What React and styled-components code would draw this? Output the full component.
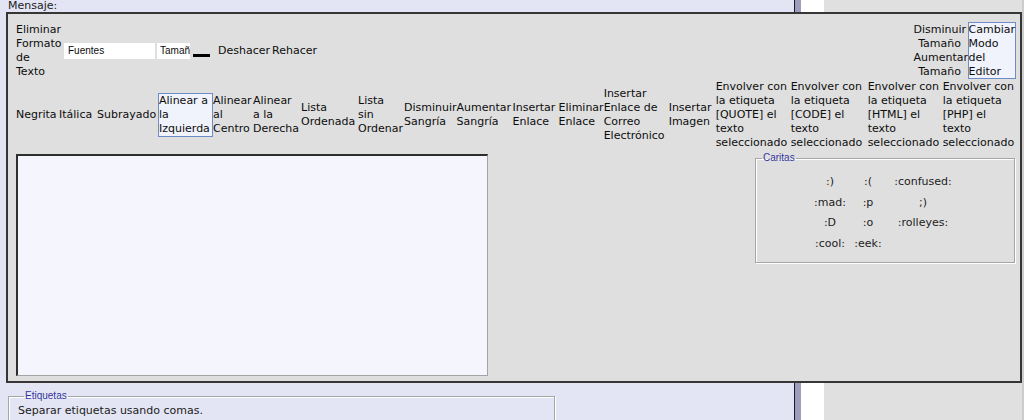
import React from 'react'
import styled, { createGlobalStyle, css } from 'styled-components'

const GlobalStyle = createGlobalStyle`
  html, body { margin: 0; padding: 0; }
  body {
    background: #e0e0e0;
    font-family: "DejaVu Sans", Verdana, sans-serif;
    font-size: 11px;
    color: #0d0d0d;
  }
`

// page frame: main column, divider, white gutter, side column
const Page = styled.div`
  display: flex;
  width: 1024px;
  height: 420px;
  overflow: hidden;
`
const MainCol = styled.div`
  flex: 0 0 794px;
  min-width: 0;
  box-sizing: border-box;
  padding-left: 6px;
  background: #e3e5f4;
`
const Divider = styled.div`
  flex: 0 0 6px;
  border-left: 1px solid #1c1c1c;
  background: #9d9dbd;
`
const Gutter = styled.div`
  flex: 0 0 23px;
  background: #fff;
`
const SideCol = styled.div`
  flex: 1;
  background: #e0e0e0;
  border-right: 2px solid #cdcdcd;
`

const FieldLabel = styled.div`
  height: 12px;
  line-height: 12px;
  padding-left: 2px;
  color: #222;
`

// editor panel
const Editor = styled.div`
  position: relative;
  z-index: 1;
  width: 1016px;
  box-sizing: border-box;
  border: 2px solid #363636;
  background: #dfdfdf;
  padding: 8px 2px 5px 8px;
`
const Toolbar = styled.div`
  display: flex;
  align-items: center;
  height: ${p => p.$h}px;
  margin-top: ${p => p.$mt || 0}px;
`
const ToolButton = styled.div`
  flex: 0 0 ${p => p.$w}px;
  box-sizing: border-box;
  line-height: 14px;
  white-space: nowrap;
  text-align: ${p => (p.$center ? 'center' : 'left')};
  ${p => p.$active && css`
    border: 1px solid #6d8dc8;
    background: #f0f3fb;
  `}
`
const SelectBox = styled.div`
  flex: 0 0 ${p => p.$w}px;
  height: 16px;
  box-sizing: border-box;
  margin-right: 2px;
  padding-left: ${p => p.$pl}px;
  overflow: hidden;
  white-space: nowrap;
  background: #fff;
  font-family: "Liberation Sans", Arial, sans-serif;
  font-size: 10px;
  line-height: 16px;
`
const ColorSwatch = styled.div`
  flex: 0 0 17px;
  height: 3px;
  margin: 10px 8px 0 1px;
  background: #000;
`
const RightGroup = styled.div`
  display: flex;
  align-items: stretch;
  margin-left: auto;
  margin-right: 2px;
  height: 100%;
`
const SizeStack = styled.div`
  display: flex;
  flex-direction: column;
  justify-content: center;
  width: 52px;
  margin-right: 2px;
`

const Workspace = styled.div`
  display: flex;
  align-items: flex-start;
  margin-top: 4px;
`
const TextArea = styled.div`
  width: 472px;
  height: 222px;
  box-sizing: border-box;
  border-style: solid;
  border-width: 2px 1px 1px 2px;
  border-color: #2e2e2e #a4a4a4 #a4a4a4 #2e2e2e;
  background: #f4f5fd;
`

const Group = styled.fieldset`
  margin: 0;
  padding: ${p => p.$pad};
  border: 1px solid #a6a6a6;
  box-shadow: inset 1px 1px 0 #fff, 1px 1px 0 #fff;
  min-width: 0;
`
const Legend = styled.legend`
  margin-left: 6px;
  padding: 0 1px;
  font-family: "Liberation Sans", Arial, sans-serif;
  font-size: 10px;
  line-height: 12px;
  color: #34349c;
`
const SmiliesBox = styled(Group)`
  width: 260px;
  box-sizing: border-box;
  margin: -2px 3px 0 auto;
`
const SmiliesGrid = styled.div`
  display: grid;
  grid-template-columns: 36px 40px 70px;
  grid-auto-rows: 20.5px;
  justify-content: center;
  text-align: center;
  line-height: 20.5px;
  color: #222;
`
const TagsBox = styled(Group)`
  width: 547px;
  box-sizing: border-box;
  margin: 7px 0 0 2px;
  color: #222;
  line-height: 14px;
`

const Lines = ({ text }) =>
  text.split('|').map((l, i, a) => (
    <React.Fragment key={i}>
      {l}
      {i < a.length - 1 && <br />}
    </React.Fragment>
  ))

const formatButtons = [
  { w: 43, t: 'Negrita' },
  { w: 38, t: 'Itálica' },
  { w: 61, t: 'Subrayado' },
  { w: 55, t: 'Alinear a|la|Izquierda', active: true },
  { w: 40, t: 'Alinear|al|Centro' },
  { w: 48, t: 'Alinear|a la|Derecha' },
  { w: 57, t: 'Lista|Ordenada' },
  { w: 46, t: 'Lista|sin|Ordenar' },
  { w: 52, t: 'Disminuir|Sangría' },
  { w: 56, t: 'Aumentar|Sangría' },
  { w: 46, t: 'Insertar|Enlace' },
  { w: 45, t: 'Eliminar|Enlace' },
  { w: 65, t: 'Insertar|Enlace de|Correo|Electrónico' },
  { w: 47, t: 'Insertar|Imagen' },
  { w: 75, t: 'Envolver con|la etiqueta|[QUOTE] el|texto|seleccionado' },
  { w: 77, t: 'Envolver con|la etiqueta|[CODE] el|texto|seleccionado' },
  { w: 75, t: 'Envolver con|la etiqueta|[HTML] el|texto|seleccionado' },
  { w: 76, t: 'Envolver con|la etiqueta|[PHP] el|texto|seleccionado' },
]

const smilies = [':)', ':(', ':confused:', ':mad:', ':p', ';)', ':D', ':o', ':rolleyes:', ':cool:', ':eek:']

export default function App() {
  return (
    <>
      <GlobalStyle />
      <Page>
        <MainCol>
          <FieldLabel>Mensaje:</FieldLabel>
          <Editor>
            <Toolbar $h={57}>
              <ToolButton $w={48}><Lines text="Eliminar|Formato|de|Texto" /></ToolButton>
              <SelectBox $w={91} $pl={4}>Fuentes</SelectBox>
              <SelectBox $w={33} $pl={3}>Tamaño</SelectBox>
              <ColorSwatch />
              <ToolButton $w={54}>Deshacer</ToolButton>
              <ToolButton $w={48}>Rehacer</ToolButton>
              <RightGroup>
                <SizeStack>
                  <ToolButton $center><Lines text="Disminuir|Tamaño" /></ToolButton>
                  <ToolButton $center><Lines text="Aumentar|Tamaño" /></ToolButton>
                </SizeStack>
                <ToolButton $w={48} $active><Lines text="Cambiar|Modo|del|Editor" /></ToolButton>
              </RightGroup>
            </Toolbar>
            <Toolbar $h={70} $mt={1}>
              {formatButtons.map(b => (
                <ToolButton key={b.t} $w={b.w} $active={b.active}>
                  <Lines text={b.t} />
                </ToolButton>
              ))}
            </Toolbar>
            <Workspace>
              <TextArea />
              <SmiliesBox $pad="8px 0 8px">
                <Legend>Caritas</Legend>
                <SmiliesGrid>
                  {smilies.map(s => <span key={s}>{s}</span>)}
                </SmiliesGrid>
              </SmiliesBox>
            </Workspace>
          </Editor>
          <TagsBox $pad="2px 9px 10px">
            <Legend>Etiquetas</Legend>
            Separar etiquetas usando comas.
          </TagsBox>
        </MainCol>
        <Divider />
        <Gutter />
        <SideCol />
      </Page>
    </>
  )
}
